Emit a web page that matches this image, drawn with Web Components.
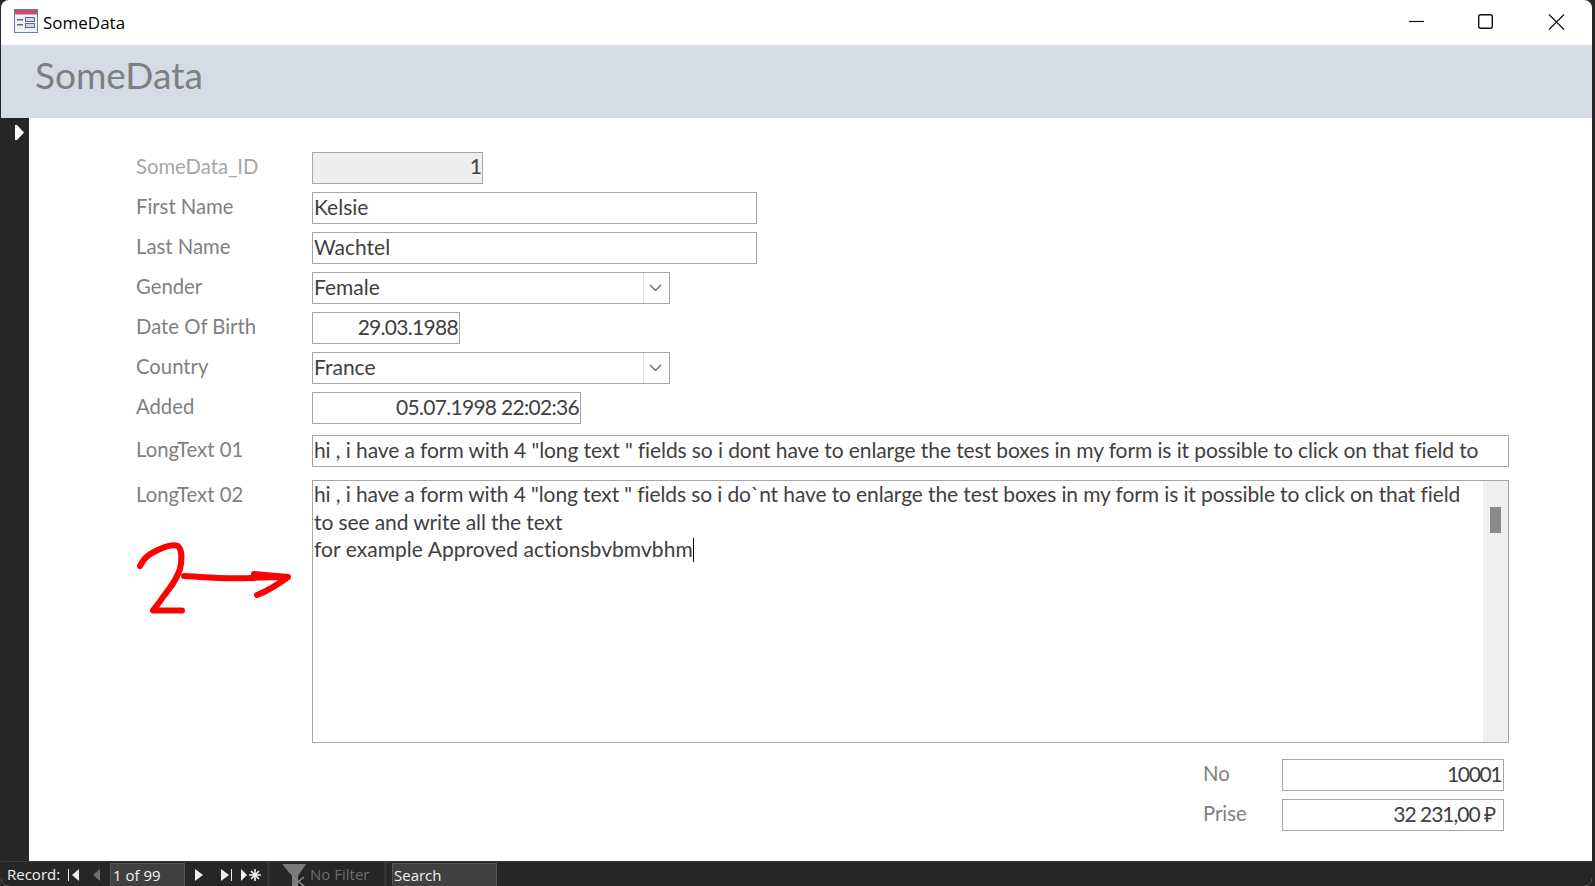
<!DOCTYPE html>
<html>
<head>
<meta charset="utf-8">
<title>SomeData</title>
<style>
  html, body { margin: 0; height: 100%; background: #262626; overflow: hidden; }
  body { font-family: Lato, "Open Sans", sans-serif; font-variant-ligatures: none; }
</style>
</head>
<body>
<access-window>
  <form-header slot="header">SomeData</form-header>

  <form-row label="SomeData_ID" style="--label-color:#a6a6a6"><text-box width="171" align="right" disabled>1</text-box></form-row>
  <form-row label="First Name"><text-box width="445">Kelsie</text-box></form-row>
  <form-row label="Last Name"><text-box width="445">Wachtel</text-box></form-row>
  <form-row label="Gender"><combo-box width="358">Female</combo-box></form-row>
  <form-row label="Date Of Birth"><text-box width="148" align="right" spacing="-0.7">29.03.1988</text-box></form-row>
  <form-row label="Country"><combo-box width="358">France</combo-box></form-row>
  <form-row label="Added"><text-box width="269" align="right" spacing="-0.7">05.07.1998 22:02:36</text-box></form-row>
  <form-row label="LongText 01" gap="11"><text-box width="1197" spacing="-0.095">hi , i have a form with 4 "long text " fields so i dont have to enlarge the test boxes in my form is it possible to click on that field to</text-box></form-row>
  <form-row label="LongText 02" gap="13"><memo-box width="1197" height="263"><span style="letter-spacing:-.11px">hi , i have a form with 4 "long text " fields so i do`nt have to enlarge the test boxes in my form is it possible to click on that field</span><br><span style="letter-spacing:-.1px">to see and write all the text</span><br><span style="letter-spacing:.05px">for example Approved actionsbvbmvbhm</span></memo-box></form-row>

  <total-row label="No" gap="8" spacing="-1.4">10001</total-row>
  <total-row label="Prise" gap="8" pad="8" spacing="-1">32 231,00 ₽</total-row>

  <red-scribble></red-scribble>
  <nav-bar slot="footer"></nav-bar>
</access-window>

<script>
// window frame: title bar, header, record selector strip, detail area and nav bar
customElements.define('access-window', class extends HTMLElement {
  constructor() {
    super();
    this.attachShadow({mode: 'open'}).innerHTML = `
    <style>
      :host { display: flex; flex-direction: column; width: 1591px; height: 886px; background: #fff;
              border-radius: 8px; overflow: hidden; margin-left: 1px; position: relative; }
      .title { display: flex; align-items: center; height: 45px; flex: none; color: #000; padding-left: 13px; padding-right: 2px; }
      .title svg.app { margin-right: 5px; margin-top: -3px; }
      .title span { flex: 1; margin-top: -1px; font-family: "Open Sans", sans-serif; font-size: 17px; }
      .btns { display: flex; height: 45px; }
      .btns svg { display: block; }
      .main { flex: 1; display: flex; min-height: 0; }
      .selector { width: 28px; background: #262626; flex: none; padding-top: 7px; box-sizing: border-box; }
      .selector svg { display: block; margin-left: 14px; }
      .detail { flex: 1; padding: 34px 0 0 107px; display: flex; flex-direction: column; }
    </style>
    <div class="title">
      <svg class="app" width="24" height="24" viewBox="0 0 24 24">
        <rect x="0.5" y="0.5" width="23" height="23" fill="#eef1f7" stroke="#6d7c96"/>
        <rect x="1" y="1" width="22" height="4" fill="#c04f72"/>
        <rect x="1" y="5" width="22" height="1" fill="#e5a9bb"/>
        <rect x="3" y="10" width="6" height="1.5" fill="#5d6d88"/>
        <rect x="3" y="15" width="6" height="1.5" fill="#5d6d88"/>
        <rect x="11.5" y="8.5" width="9" height="4" fill="#cfd7e6" stroke="#5d6d88"/>
        <rect x="11.5" y="14.5" width="9" height="4" fill="#cfd7e6" stroke="#5d6d88"/>
      </svg>
      <span>SomeData</span>
      <div class="btns">
        <svg width="70" height="45"><path d="M29 21.5H44" stroke="#111" stroke-width="1.2" fill="none"/></svg>
        <svg width="70" height="45"><rect x="28.7" y="14.7" width="13.6" height="13.6" rx="2" stroke="#111" stroke-width="1.4" fill="none"/></svg>
        <svg width="70" height="45"><path d="M29 14.5L44 29.5M44 14.5L29 29.5" stroke="#111" stroke-width="1.2" fill="none"/></svg>
      </div>
    </div>
    <slot name="header"></slot>
    <div class="main">
      <div class="selector">
        <svg width="9" height="15" viewBox="0 0 9 15"><path d="M0 0H2L9 7.5 2 15H0Z" fill="#fff"/></svg>
      </div>
      <div class="detail"><slot></slot></div>
    </div>
    <slot name="footer"></slot>`;
  }
});

customElements.define('form-header', class extends HTMLElement {
  constructor() {
    super();
    this.attachShadow({mode: 'open'}).innerHTML = `
    <style>
      :host { display: flex; align-items: center; height: 73px; flex: none; background: #d6dce5; color: #7f7f7f;
              font-size: 37px; padding-left: 34px; box-sizing: border-box; padding-bottom: 14px; }
    </style><slot></slot>`;
  }
});

// label on the left, control on the right
customElements.define('form-row', class extends HTMLElement {
  constructor() {
    super();
    const gap = this.getAttribute('gap');
    this.attachShadow({mode: 'open'}).innerHTML = `
    <style>
      :host { display: grid; grid-template-columns: 176px auto; justify-content: start; margin-bottom: 8px; color: var(--label-color, #7f7f7f); font-size: 20.3px; }
      label { line-height: 28px; }
    </style>
    <label>${this.getAttribute('label')}</label><slot></slot>`;
    if (gap) this.style.marginTop = (gap - 8) + 'px';
  }
});

customElements.define('text-box', class extends HTMLElement {
  constructor() {
    super();
    const w = this.getAttribute('width');
    const dis = this.hasAttribute('disabled');
    this.attachShadow({mode: 'open'}).innerHTML = `
    <style>
      :host { display: block; box-sizing: border-box; width: ${w}px; height: 32px; border: 1px solid #a6a6a6; color: #404040;
              background: ${dis ? '#eeeeee' : '#fff'}; font-size: 21px; line-height: ${dis ? 25 : 27}px; padding: 0 ${dis ? 0 : 1}px 0 1px; white-space: nowrap; overflow: hidden;
              letter-spacing: ${this.getAttribute('spacing') || 0}px;
              text-align: ${this.getAttribute('align') || 'left'}; }
    </style><slot></slot>`;
  }
});

customElements.define('combo-box', class extends HTMLElement {
  constructor() {
    super();
    this.attachShadow({mode: 'open'}).innerHTML = `
    <style>
      :host { display: flex; box-sizing: border-box; width: ${this.getAttribute('width')}px; height: 32px; border: 1px solid #a6a6a6;
              color: #404040; font-size: 21px; line-height: 27px; padding-left: 1px; }
      .t { flex: 1; }
      .drop { width: 26px; padding-right: 2px; box-sizing: border-box; border-left: 1px solid #e6e6e6; display: flex; align-items: center; justify-content: center; }
    </style>
    <div class="t"><slot></slot></div>
    <div class="drop"><svg width="13" height="8" viewBox="0 0 13 8"><path d="M1 1L6.5 6.5 12 1" fill="none" stroke="#595959" stroke-width="1.1"/></svg></div>`;
  }
});

customElements.define('memo-box', class extends HTMLElement {
  constructor() {
    super();
    this.attachShadow({mode: 'open'}).innerHTML = `
    <style>
      :host { display: flex; box-sizing: border-box; width: ${this.getAttribute('width')}px; height: ${this.getAttribute('height')}px;
              border: 1px solid #a6a6a6; color: #404040; font-size: 21px; line-height: 27.5px; }
      .t { flex: 1; margin-top: -1px; padding-left: 1px; }
      .caret { display: inline-block; width: 1px; height: 24px; background: #000; vertical-align: -5px; }
      .bar { width: 25px; background: #efefef; flex: none; padding: 26px 7px 0; box-sizing: border-box; }
      .thumb { width: 11px; height: 26px; background: #8a8a8a; }
    </style>
    <div class="t"><slot></slot><span class="caret"></span></div>
    <div class="bar"><div class="thumb"></div></div>`;
  }
});

// No / Prise rows sit at the right edge of the form
customElements.define('total-row', class extends HTMLElement {
  constructor() {
    super();
    const pad = this.getAttribute('pad') || 2;
    this.attachShadow({mode: 'open'}).innerHTML = `
    <style>
      :host { display: grid; grid-template-columns: 79px 222px; justify-content: start; margin-left: 1067px; margin-top: ${this.getAttribute('gap')}px; color: #7f7f7f; font-size: 20.3px; }
      label { line-height: 28px; }
      .box { box-sizing: border-box; height: 32px; border: 1px solid #a6a6a6; color: #404040; font-size: 21px; line-height: 27px; text-align: right; padding-right: ${pad}px;
             letter-spacing: ${this.getAttribute('spacing') || 0}px; }
    </style>
    <label>${this.getAttribute('label')}</label><div class="box"><slot></slot></div>`;
  }
});

// hand drawn note, lies over the form
customElements.define('red-scribble', class extends HTMLElement {
  constructor() {
    super();
    this.attachShadow({mode: 'open'}).innerHTML = `
    <style>:host { position: absolute; left: 0; top: 0; pointer-events: none; }</style>
    <svg width="340" height="630" style="display:block">
      <g transform="translate(119,0)" fill="none" stroke="#ff0000" stroke-width="6" stroke-linecap="round" stroke-linejoin="round">
        <path d="M20 566C24 557 31 553 40 549C47 546 53 544 58 546C62 550 62 560 60 569C56 581 50 588 43 597C40 602 36 606 33 610.500L62 610.500"/>
        <path d="M64 576C85 577 100 579 129 578C145 577 155 577 168 577M134 574L168 577C160 583 150 590 137 595"/>
      </g>
    </svg>`;
  }
});

customElements.define('nav-bar', class extends HTMLElement {
  constructor() {
    super();
    this.attachShadow({mode: 'open'}).innerHTML = `
    <style>
      :host { display: flex; align-items: flex-end; height: 25px; flex: none; background: #262626; color: #f2f2f2; font-size: 15px; position: relative;
              font-family: "Open Sans", sans-serif; padding-left: 6px; box-sizing: border-box; border-top: 1px solid #3a3a3a; white-space: nowrap; }
      .lbl { width: 61px; line-height: 24px; align-self: flex-end; }
      svg { display: block; flex: none; }
      .num { width: 75px; height: 23px; box-sizing: border-box; background: #404040; border: 1px solid #555; border-bottom: 0; line-height: 23px; padding-left: 2px; }
      .sep { width: 3px; height: 24px; background: #333; flex: none; }
      .filter { color: #6e6e6e; display: flex; align-items: flex-end; width: 114px; }
      .filter span { line-height: 24px; margin-left: 3px; }
      .search { width: 105px; height: 23px; box-sizing: border-box; background: #404040; border: 1px solid #555; border-bottom: 0; line-height: 23px; padding-left: 1px; }
    </style>
    <span class="lbl">Record:</span>
    <svg width="42" height="24" viewBox="0 0 42 24">
      <path d="M0.500 7V19" stroke="#eee" stroke-width="1"/><path d="M11 7V19L4 13Z" fill="#eee"/>
      <path d="M32 7V19L25 13Z" fill="#6e6e6e"/>
    </svg>
    <div class="num">1 of 99</div>
    <svg width="82" height="24" viewBox="0 0 82 24">
      <path d="M10 7V19L18 13Z" fill="#eee"/>
      <path d="M36 7V19L44 13Z" fill="#eee"/><path d="M46.500 7V19" stroke="#eee" stroke-width="1"/>
      <path d="M56 7V19L62 13Z" fill="#eee"/>
      <path d="M70 7V19M64 13H76M66 9L74 17M74 9L66 17" stroke="#eee" stroke-width="1.6"/>
    </svg>
    <div class="sep"></div>
    <div class="filter">
      <svg width="25" height="22" viewBox="0 0 25 22" style="margin-left:12px">
        <path d="M0 0H24L16 12V22H10V12Z" fill="#7a7a7a"/>
        <path d="M11 13L22 22M22 13L11 22" stroke="#8a8a8a" stroke-width="1.500"/>
      </svg>
      <span>No Filter</span>
    </div>
    <div class="sep" style="margin-right:5px"></div>
    <div class="search">Search</div>`;
  }
});
</script>
</body>
</html>
